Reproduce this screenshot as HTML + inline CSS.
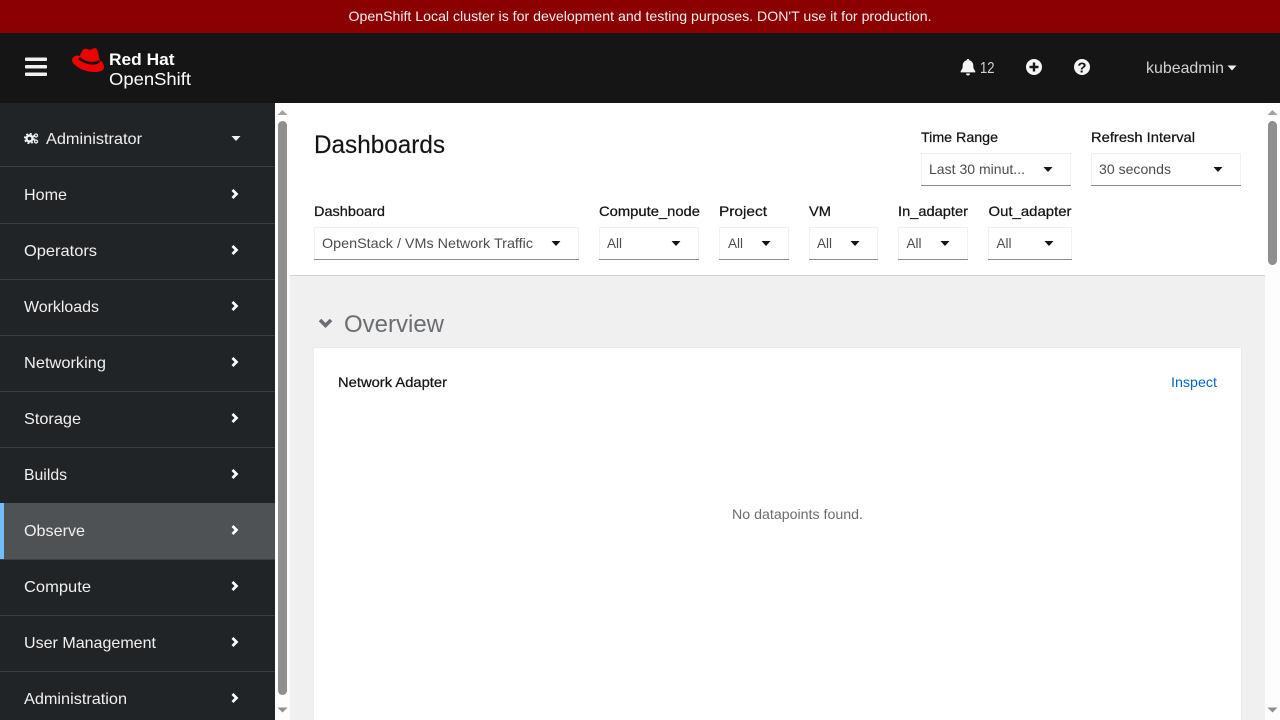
<!DOCTYPE html>
<html lang="en"><head><meta charset="utf-8"><title>Dashboards</title>
<style>
html,body{margin:0;padding:0;width:1280px;height:720px;overflow:hidden;background:#fff}
svg{display:block}
text{font-family:"Liberation Sans",sans-serif;font-size:14px}
.nav{font-size:16px;fill:#f0f0f0}
.lbl{fill:#151515;stroke:#151515;stroke-width:.25px}
.val{fill:#4a4d50}
</style></head><body>
<svg xmlns="http://www.w3.org/2000/svg" width="1280" height="720" viewBox="0 0 1280 720">
<defs>
<path id="car" d="M-4.5 -2.5H4.500L0 2.500Z"/>
<path id="chev" d="M-2 -4L2 0L-2 4" fill="none" stroke="#fff" stroke-width="2.700"/>
</defs>
<rect width="1280" height="720" fill="#f0f0f0"/>
<!-- banner -->
<rect width="1280" height="33" fill="#8b0000"/>
<text x="348.5" y="21" fill="#f0f0f0" textLength="583" lengthAdjust="spacingAndGlyphs">OpenShift Local cluster is for development and testing purposes. DON'T use it for production.</text>
<!-- masthead -->
<rect y="33" width="1280" height="70" fill="#151515"/>
<rect x="25" y="57.500" width="22" height="3.500" rx="1" fill="#f0f0f0"/>
<rect x="25" y="65" width="22" height="3.500" rx="1" fill="#f0f0f0"/>
<rect x="25" y="72.500" width="22" height="3.500" rx="1" fill="#f0f0f0"/>
<path d="M84 49C86 48.200 88 49.800 90 49.800C92 49.800 93 48 95 48C97 48 98 51 99 57L99.800 60.500C102.500 62 104 64.500 104 67C104 70.500 100 72 95 72C83 72 72 65 72 60C72 58 74 56 77 55.500L80 56C81 53 82.500 49.500 84 49Z" fill="#e00"/>
<path d="M79 58C84 62.500 94 65.500 99.500 61" fill="none" stroke="#151515" stroke-width="2.800"/>
<text x="109" y="65" style="font-size:16.5px;font-weight:bold" fill="#fff" textLength="65.5" lengthAdjust="spacingAndGlyphs">Red Hat</text>
<text x="109" y="85" style="font-size:17.5px" fill="#fff" textLength="82" lengthAdjust="spacingAndGlyphs">OpenShift</text>
<path d="M968 59c.9 0 1.400.6 1.400 1.400 2.600.6 3.900 2.800 3.900 5.400 0 2.600.7 3.800 2 5.200v1.400h-14.600v-1.400c1.300-1.400 2-2.600 2-5.200 0-2.600 1.300-4.800 3.900-5.400 0-.8.500-1.400 1.400-1.400zM966 73.500h4c0 1.200-.9 2-2 2s-2-.8-2-2z" fill="#f5f5f5"/>
<text x="980" y="73" style="font-size:16px" fill="#d2d2d2" textLength="14.5" lengthAdjust="spacingAndGlyphs">12</text>
<circle cx="1034" cy="67" r="8" fill="#f5f5f5"/>
<path d="M1029.500 67h9M1034 62.500v9" stroke="#151515" stroke-width="2.400"/>
<circle cx="1082" cy="67" r="8" fill="#f5f5f5"/>
<text x="1082" y="72.500" text-anchor="middle" style="font-size:15px;font-weight:bold" fill="#151515">?</text>
<text x="1146" y="73" style="font-size:16px" fill="#d2d2d2" textLength="78" lengthAdjust="spacingAndGlyphs">kubeadmin</text>
<use href="#car" x="1232" y="68" fill="#f0f0f0"/>
<!-- sidebar -->
<rect y="103" width="275" height="617" fill="#212427"/>
<g fill="#3c3f42">
<rect y="166" width="275" height="1"/><rect y="223" width="275" height="1"/><rect y="279" width="275" height="1"/><rect y="335" width="275" height="1"/><rect y="391" width="275" height="1"/><rect y="447" width="275" height="1"/><rect y="615" width="275" height="1"/><rect y="671" width="275" height="1"/>
</g>
<rect y="503" width="275" height="56" fill="#4f5255"/>
<rect y="503" width="4" height="56" fill="#73bcf7"/>
<rect y="559" width="275" height="1" fill="#3c3f42"/>
<circle cx="29.500" cy="138.500" r="3" fill="none" stroke="#f0f0f0" stroke-width="2.400"/>
<circle cx="29.500" cy="138.500" r="4.800" fill="none" stroke="#f0f0f0" stroke-width="1.600" stroke-dasharray="1.900 1.900"/>
<circle cx="36" cy="135.500" r="1.500" fill="none" stroke="#f0f0f0" stroke-width="1.300"/>
<circle cx="36" cy="141.500" r="1.500" fill="none" stroke="#f0f0f0" stroke-width="1.300"/>
<text class="nav" x="46" y="144" textLength="96" lengthAdjust="spacingAndGlyphs">Administrator</text>
<use href="#car" x="236" y="138.500" fill="#f0f0f0"/>
<text class="nav" x="24" y="200" textLength="43" lengthAdjust="spacingAndGlyphs">Home</text>
<text class="nav" x="24" y="256" textLength="73" lengthAdjust="spacingAndGlyphs">Operators</text>
<text class="nav" x="24" y="312" textLength="75" lengthAdjust="spacingAndGlyphs">Workloads</text>
<text class="nav" x="24" y="368" textLength="82" lengthAdjust="spacingAndGlyphs">Networking</text>
<text class="nav" x="24" y="424" textLength="57" lengthAdjust="spacingAndGlyphs">Storage</text>
<text class="nav" x="24" y="480" textLength="43" lengthAdjust="spacingAndGlyphs">Builds</text>
<text class="nav" x="24" y="536" textLength="61" lengthAdjust="spacingAndGlyphs">Observe</text>
<text class="nav" x="24" y="592" textLength="67" lengthAdjust="spacingAndGlyphs">Compute</text>
<text class="nav" x="24" y="648" textLength="132" lengthAdjust="spacingAndGlyphs">User Management</text>
<text class="nav" x="24" y="704" textLength="103" lengthAdjust="spacingAndGlyphs">Administration</text>
<use href="#chev" x="234.500" y="194"/><use href="#chev" x="234.500" y="250"/><use href="#chev" x="234.500" y="306"/><use href="#chev" x="234.500" y="362"/><use href="#chev" x="234.500" y="418"/><use href="#chev" x="234.500" y="474"/><use href="#chev" x="234.500" y="530"/><use href="#chev" x="234.500" y="586"/><use href="#chev" x="234.500" y="642"/><use href="#chev" x="234.500" y="698"/>
<!-- sidebar scrollbar -->
<rect x="275" y="103" width="15" height="617" fill="#fdfdfd"/>
<rect x="278" y="121" width="9" height="574" rx="4.500" fill="#8f8f8f"/>
<path d="M277.500 115L282.500 110L287.500 115Z" fill="#a3a3a3"/>
<path d="M277.500 707.500H287.500L282.500 712.500Z" fill="#8f8f8f"/>
<!-- main header -->
<rect x="290" y="103" width="975" height="172" fill="#fff"/>
<rect x="290" y="275" width="975" height="1" fill="#d2d2d2"/>
<text x="314" y="153" style="font-size:25px" fill="#151515" stroke="#151515" stroke-width=".15" textLength="131" lengthAdjust="spacingAndGlyphs">Dashboards</text>
<text class="lbl" x="921" y="142" textLength="77" lengthAdjust="spacingAndGlyphs">Time Range</text>
<text class="lbl" x="1091" y="142" textLength="104" lengthAdjust="spacingAndGlyphs">Refresh Interval</text>
<text class="lbl" x="314" y="216" textLength="71" lengthAdjust="spacingAndGlyphs">Dashboard</text>
<text class="lbl" x="599" y="216" textLength="101" lengthAdjust="spacingAndGlyphs">Compute_node</text>
<text class="lbl" x="719" y="216" textLength="48" lengthAdjust="spacingAndGlyphs">Project</text>
<text class="lbl" x="809" y="216" textLength="22" lengthAdjust="spacingAndGlyphs">VM</text>
<text class="lbl" x="898" y="216" textLength="70" lengthAdjust="spacingAndGlyphs">In_adapter</text>
<text class="lbl" x="988.500" y="216" textLength="83" lengthAdjust="spacingAndGlyphs">Out_adapter</text>
<!-- selects -->
<g fill="#fff" stroke="#f0f0f0">
<rect x="921.500" y="153.500" width="149" height="32"/><rect x="1091.500" y="153.500" width="149" height="32"/>
<rect x="314.500" y="227.500" width="264" height="32"/><rect x="599.500" y="227.500" width="99" height="32"/><rect x="719.500" y="227.500" width="69" height="32"/><rect x="809.500" y="227.500" width="68" height="32"/><rect x="898.500" y="227.500" width="69" height="32"/><rect x="988.500" y="227.500" width="83" height="32"/>
</g>
<g fill="#8a8d90">
<rect x="921" y="185" width="150" height="1"/><rect x="1091" y="185" width="150" height="1"/>
<rect x="314" y="259" width="265" height="1"/><rect x="599" y="259" width="100" height="1"/><rect x="719" y="259" width="70" height="1"/><rect x="809" y="259" width="69" height="1"/><rect x="898" y="259" width="70" height="1"/><rect x="988" y="259" width="84" height="1"/>
</g>
<text class="val" x="929" y="174" textLength="96" lengthAdjust="spacingAndGlyphs">Last 30 minut...</text>
<text class="val" x="1099" y="174" textLength="72" lengthAdjust="spacingAndGlyphs">30 seconds</text>
<text class="val" x="322" y="248" textLength="211" lengthAdjust="spacingAndGlyphs">OpenStack / VMs Network Traffic</text>
<text class="val" x="607" y="248" textLength="15" lengthAdjust="spacingAndGlyphs">All</text>
<text class="val" x="728" y="248" textLength="15" lengthAdjust="spacingAndGlyphs">All</text>
<text class="val" x="817" y="248" textLength="15" lengthAdjust="spacingAndGlyphs">All</text>
<text class="val" x="906.500" y="248" textLength="15" lengthAdjust="spacingAndGlyphs">All</text>
<text class="val" x="996.500" y="248" textLength="15" lengthAdjust="spacingAndGlyphs">All</text>
<g fill="#151515">
<use href="#car" x="1048" y="169.500"/><use href="#car" x="1218" y="169.500"/>
<use href="#car" x="556" y="243.500"/><use href="#car" x="676" y="243.500"/><use href="#car" x="766" y="243.500"/><use href="#car" x="855" y="243.500"/><use href="#car" x="945" y="243.500"/><use href="#car" x="1049" y="243.500"/>
</g>
<!-- overview -->
<path d="M320 320L325.500 325.500L331 320" fill="none" stroke="#6a6e73" stroke-width="3.600"/>
<text x="344" y="332" style="font-size:24px" fill="#6a6e73" textLength="100" lengthAdjust="spacingAndGlyphs">Overview</text>
<rect x="313" y="347" width="929" height="373" fill="#ebebeb"/>
<rect x="314" y="348" width="927" height="372" fill="#fff"/>
<text class="lbl" x="338" y="387" textLength="109" lengthAdjust="spacingAndGlyphs">Network Adapter</text>
<text x="1171" y="387" fill="#0066cc" textLength="46" lengthAdjust="spacingAndGlyphs">Inspect</text>
<text x="732" y="519" fill="#6a6e73" textLength="131" lengthAdjust="spacingAndGlyphs">No datapoints found.</text>
<!-- main scrollbar -->
<rect x="1265" y="103" width="15" height="617" fill="#fdfdfd"/>
<rect x="1268" y="121" width="9" height="144" rx="4.500" fill="#8f8f8f"/>
<path d="M1267.500 115L1272.500 110L1277.500 115Z" fill="#a3a3a3"/>
<path d="M1267.500 707.500H1277.500L1272.500 712.500Z" fill="#8f8f8f"/>
</svg>
</body></html>
